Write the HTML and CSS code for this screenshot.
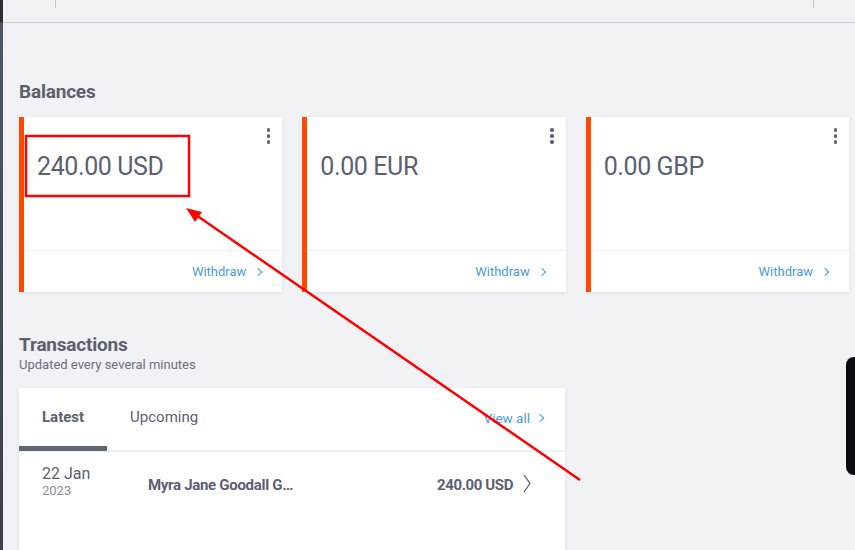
FILE: index.html
```html
<!DOCTYPE html>
<html lang="en">
<head>
  <meta charset="UTF-8" />
  <meta name="viewport" content="width=device-width, initial-scale=1.0" />
  <title>Balances</title>
  <link rel="stylesheet" href="styles.css">
</head>
<body>
  <div class="app">
    <div class="rail"></div>

    <main class="main">
      <div class="topbar">
        <div class="topbar-gap"></div>
        <div class="topbar-mid"></div>
      </div>

      <section class="content">
        <h2 class="section-title">Balances</h2>

        <div class="balances">
          <div class="balance-card">
            <div class="balance-top">
              <div class="amount">240.00 USD</div>
              <button class="kebab" aria-label="More"><span></span><span></span><span></span></button>
            </div>
            <div class="balance-foot">
              <a class="link" href="#">Withdraw <span class="chev"></span></a>
            </div>
          </div>
          <div class="balance-card">
            <div class="balance-top">
              <div class="amount">0.00 EUR</div>
              <button class="kebab" aria-label="More"><span></span><span></span><span></span></button>
            </div>
            <div class="balance-foot">
              <a class="link" href="#">Withdraw <span class="chev"></span></a>
            </div>
          </div>
          <div class="balance-card">
            <div class="balance-top">
              <div class="amount">0.00 GBP</div>
              <button class="kebab" aria-label="More"><span></span><span></span><span></span></button>
            </div>
            <div class="balance-foot">
              <a class="link" href="#">Withdraw <span class="chev"></span></a>
            </div>
          </div>
        </div>

        <h2 class="section-title tx-title">Transactions</h2>
        <p class="subtitle">Updated every several minutes</p>

        <div class="tx-card">
          <div class="tabs">
            <button class="tab active">Latest</button>
            <button class="tab">Upcoming</button>
            <a class="link view-all" href="#">View all <span class="chev"></span></a>
          </div>
          <div class="tx-row">
            <div class="tx-date">
              <div class="day">22 Jan</div>
              <div class="year">2023</div>
            </div>
            <div class="tx-name">Myra Jane Goodall G…</div>
            <div class="tx-amount">240.00 USD</div>
            <svg class="tx-chev" width="8" height="19" viewBox="0 0 8 19"><path d="M1 1 L7 9.5 L1 18" fill="none" stroke="#5b6170" stroke-width="1.3"/></svg>
          </div>
        </div>
      </section>
    </main>
  </div>

  <div class="side-tab"></div>

  <svg class="annotation" width="855" height="550" viewBox="0 0 855 550">
    <rect x="26" y="136" width="163" height="60" fill="none" stroke="#f00" stroke-width="2.5"/>
    <line x1="580" y1="480" x2="196" y2="215" stroke="#f00" stroke-width="2.5"/>
    <polygon points="186,208 202,212 195,222" fill="#f00"/>
  </svg>
</body>
</html>
```

FILE: styles.css
```css
body {
  margin: 0;
  font-family: 'Roboto', sans-serif;
  background: #f1f2f6;
  color: #5b6170;
  overflow: hidden;
}

.app {
  display: flex;
  min-height: 550px;
}

.rail {
  width: 3px;
  flex: none;
  background: linear-gradient(#2b2f36 0, #2b2f36 22px, #4d5566 23px, #3a404c 550px);
}

.main {
  flex: 1;
}

.topbar {
  display: flex;
  height: 22px;
  border-bottom: 1px solid #c9cbd7;
}

.topbar-gap {
  width: 52px;
}

.topbar-mid {
  width: 757px;
  height: 8px;
  border-left: 1px solid #c4c6cc;
  border-right: 1px solid #c4c6cc;
}

.content {
  padding: 57px 0 0 16px;
}

.section-title {
  margin: 0;
  font-size: 19px;
  line-height: 24px;
  font-weight: 700;
  color: #5c606c;
  letter-spacing: -0.2px;
}

.balances {
  display: grid;
  grid-template-columns: repeat(3, 1fr);
  gap: 20px;
  width: 830px;
  margin-top: 13px;
}

.balance-card {
  background: #fff;
  border-left: 5px solid #ff4a00;
  height: 175px;
  box-shadow: 0 1px 4px rgba(40, 50, 80, 0.08);
  display: flex;
  flex-direction: column;
}

.balance-top {
  flex: 1;
  display: flex;
  justify-content: space-between;
  align-items: flex-start;
  padding: 10px 10px 0 13px;
}

.amount {
  margin-top: 25px;
  font-size: 25px;
  line-height: 30px;
  letter-spacing: -0.4px;
  color: #5b6171;
}

.kebab {
  display: flex;
  flex-direction: column;
  gap: 2.5px;
  padding: 1px 2px;
  border: none;
  background: none;
}

.kebab span {
  width: 3.5px;
  height: 3.5px;
  border-radius: 50%;
  background: #5b6170;
}

.balance-foot {
  height: 41px;
  border-top: 1px solid #eff0f3;
  display: flex;
  justify-content: flex-end;
  align-items: center;
  padding-right: 19px;
}

.link {
  color: #4a9be0;
  text-decoration: none;
  font-size: 13px;
  display: flex;
  align-items: center;
  gap: 9px;
}

.chev {
  width: 5px;
  height: 5px;
  border-top: 1.3px solid #4a9be0;
  border-right: 1.3px solid #4a9be0;
  transform: rotate(45deg);
  margin-right: 2px;
}

.tx-title {
  margin-top: 41px;
}

.subtitle {
  margin: 0;
  font-size: 13px;
  line-height: 16px;
  color: #6b7080;
}

.tx-card {
  background: #fff;
  width: 546px;
  margin-top: 15px;
  height: 170px;
  box-shadow: 0 1px 4px rgba(40, 50, 80, 0.08);
}

.tabs {
  display: flex;
  align-items: flex-start;
  border-bottom: 2px solid #eef0f4;
  padding-right: 20px;
}

.tab {
  height: 63px;
  padding: 0 23px;
  border: none;
  border-bottom: 5px solid transparent;
  background: none;
  font-family: 'Roboto', sans-serif;
  font-size: 15px;
  color: #5b6170;
  margin-bottom: -1px;
}

.tab.active {
  font-weight: 700;
  border-bottom-color: #5f6673;
}

.view-all {
  margin-left: auto;
  margin-top: 22px;
  font-size: 13.5px;
  line-height: 16px;
  gap: 7px;
}

.tx-row {
  display: flex;
  align-items: center;
  padding: 12px 0 0 23px;
}

.tx-date .day {
  font-size: 16px;
  line-height: 19px;
  color: #5b6170;
}

.tx-date .year {
  font-size: 13px;
  line-height: 16px;
  color: #8a8f9c;
}

.tx-date {
  width: 106px;
}

.tx-name {
  white-space: nowrap;
  font-weight: 700;
  font-size: 15px;
  letter-spacing: -0.3px;
  color: #5b6170;
  margin-top: 6px;
}

.tx-amount {
  margin-left: auto;
  font-weight: 700;
  font-size: 15px;
  letter-spacing: -0.4px;
  color: #5b6170;
  margin-top: 6px;
}

.tx-chev {
  margin: 3px 34px 0 10px;
}

.side-tab {
  position: fixed;
  right: 0;
  top: 357px;
  width: 9px;
  height: 118px;
  background: #0b0c12;
  border-radius: 8px 0 0 8px;
}

.annotation {
  position: fixed;
  left: 0;
  top: 0;
  pointer-events: none;
}
```
